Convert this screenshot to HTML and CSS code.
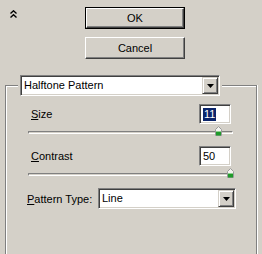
FILE: index.html
```html
<!DOCTYPE html>
<html lang="en">
<head>
  <meta charset="UTF-8">
  <title>Halftone Pattern</title>
  <link rel="stylesheet" href="styles.css">
</head>
<body>
  <div class="dialog">
    <div class="top">
      <svg class="collapse" width="7" height="9" viewBox="0 0 7 9">
        <path d="M0.5 3.5 L3.5 0.8 L6.5 3.5 M0.5 7.5 L3.5 4.8 L6.5 7.5" fill="none" stroke="#000" stroke-width="1.4"/>
      </svg>
      <div class="buttons">
        <div class="btn btn-default"><span>OK</span></div>
        <div class="btn"><span>Cancel</span></div>
      </div>
    </div>

    <fieldset class="group">
      <legend class="group-legend">
        <div class="combo combo-filter">
          <span class="combo-text">Halftone Pattern</span>
          <span class="combo-arrow"><svg width="7" height="4" viewBox="0 0 7 4"><path d="M0 0H7L3.5 4Z" fill="#000"/></svg></span>
        </div>
      </legend>

      <div class="group-body">
        <div class="field-row">
          <span class="field-label"><u>S</u>ize</span>
          <div class="textbox"><span class="selected">11</span></div>
        </div>
        <div class="slider">
          <div class="track"></div>
          <svg class="thumb" style="left: 187px" width="7" height="10" viewBox="0 0 7 10">
            <path d="M3.5 0.5 L6.5 3.5 V9.5 H0.5 V3.5 Z" fill="#f4f4f0" stroke="#9a9a9a"/>
            <rect x="1" y="6" width="5" height="3.5" fill="#1f9a2a"/>
            <rect x="1" y="5" width="5" height="1" fill="#8fd08f"/>
          </svg>
        </div>

        <div class="field-row">
          <span class="field-label"><u>C</u>ontrast</span>
          <div class="textbox"><span>50</span></div>
        </div>
        <div class="slider">
          <div class="track"></div>
          <svg class="thumb" style="left: 199px" width="7" height="10" viewBox="0 0 7 10">
            <path d="M3.5 0.5 L6.5 3.5 V9.5 H0.5 V3.5 Z" fill="#f4f4f0" stroke="#9a9a9a"/>
            <rect x="1" y="6" width="5" height="3.5" fill="#1f9a2a"/>
            <rect x="1" y="5" width="5" height="1" fill="#8fd08f"/>
          </svg>
        </div>

        <div class="pattern-row">
          <span><u>P</u>attern Type:</span>
          <div class="combo combo-pattern">
            <span class="combo-text">Line</span>
            <span class="combo-arrow"><svg width="7" height="4" viewBox="0 0 7 4"><path d="M0 0H7L3.5 4Z" fill="#000"/></svg></span>
          </div>
        </div>
      </div>
    </fieldset>
  </div>
</body>
</html>
```

FILE: styles.css
```css
* {
  margin: 0;
  padding: 0;
  box-sizing: border-box;
}

body {
  width: 262px;
  height: 254px;
  overflow: hidden;
  background: #d4d0c8;
  font-family: 'Liberation Sans', Arial, sans-serif;
  font-size: 11px;
  color: #000;
}

.dialog {
  width: 262px;
  height: 254px;
}

.top {
  display: flex;
  padding: 7px 0 0 10px;
}

.collapse {
  margin-top: 3px;
  flex-shrink: 0;
}

.buttons {
  margin-left: 68px;
  display: flex;
  flex-direction: column;
  gap: 8px;
}

/* classic raised push button */
.btn {
  width: 100px;
  height: 22px;
  border: 1px solid;
  border-color: #fff #404040 #404040 #fff;
  box-shadow: inset -1px -1px 0 #808080;
  display: flex;
  align-items: center;
  justify-content: center;
}

.btn-default {
  border: 1px solid #000;
  box-shadow: none;
}

.btn-default span {
  width: 100%;
  height: 100%;
  display: flex;
  align-items: center;
  justify-content: center;
  border: 1px solid;
  border-color: #fff #404040 #404040 #fff;
  box-shadow: inset -1px -1px 0 #808080;
}

/* etched group box, runs off the bottom of the panel */
.group {
  margin: 16px 0 0 5px;
  width: 252px;
  height: 179px;
  border: 1px solid #808080;
  border-bottom: none;
  box-shadow: inset 1px 1px 0 #fff, 1px 0 0 #fff;
  padding: 0;
}

.group-legend {
  margin-left: 12px;
  padding: 0 2px;
  background: #d4d0c8;
}

.group-body {
  padding: 8px 0 0 22px;
}

/* sunken combo box */
.combo {
  height: 21px;
  display: flex;
  align-items: stretch;
  background: #fff;
  border: 1px solid;
  border-color: #808080 #fff #fff #808080;
  box-shadow: inset 1px 1px 0 #404040, inset -1px -1px 0 #d4d0c8;
  padding: 1px;
}

.combo-filter {
  width: 200px;
}

.combo-text {
  flex: 1;
  padding-left: 2px;
  line-height: 17px;
}

.combo-arrow {
  width: 16px;
  flex-shrink: 0;
  background: #d4d0c8;
  border: 1px solid;
  border-color: #d4d0c8 #404040 #404040 #d4d0c8;
  box-shadow: inset 1px 1px 0 #fff, inset -1px -1px 0 #808080;
  display: flex;
  align-items: center;
  justify-content: center;
}

.field-row {
  width: 203px;
  height: 20px;
  display: flex;
  align-items: center;
  justify-content: space-between;
}

.field-label {
  padding-left: 3px;
}

.textbox {
  width: 32px;
  height: 20px;
  background: #fff;
  border: 1px solid;
  border-color: #808080 #fff #fff #808080;
  box-shadow: inset 1px 1px 0 #404040, inset -1px -1px 0 #d4d0c8;
  padding: 2px 0 0 3px;
  line-height: 14px;
}

.selected {
  display: inline-block;
  background: #0a246a;
  color: #fff;
  padding: 0 1px;
  line-height: 13px;
}

.slider {
  position: relative;
  width: 205px;
  height: 10px;
  margin: 2px 0 10px;
}

.track {
  position: relative;
  top: 5px;
  height: 3px;
  border: 1px solid;
  border-color: #808080 #fff #fff #808080;
  border-radius: 1px;
  background: #d4d0c8;
}

.thumb {
  position: absolute;
  top: 0;
}

.pattern-row {
  width: 209px;
  display: flex;
  align-items: center;
  justify-content: space-between;
  margin: 1px 0 0 -1px;
}

.combo-pattern {
  width: 138px;
}
```
